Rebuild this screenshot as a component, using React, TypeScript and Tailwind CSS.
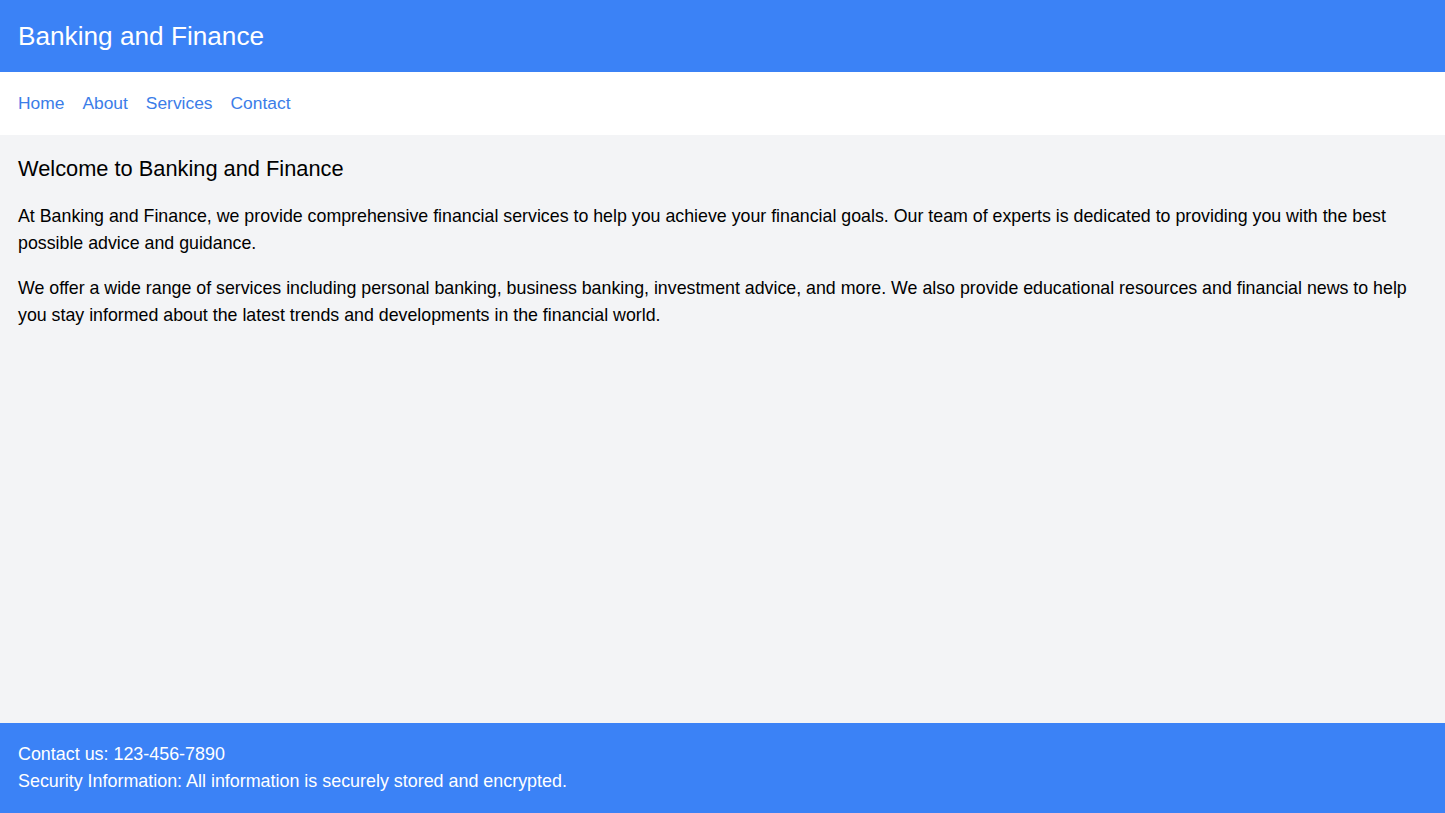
import React from "react";

export default function App() {
  return (
    <div className="min-h-screen flex flex-col bg-[#f3f4f6] text-black font-['Liberation_Sans',Arial,sans-serif]">
      <header className="bg-[#3b82f6] px-[18px] py-[18px]">
        <h1 className="text-[26.2px] leading-[36px] text-white">Banking and Finance</h1>
      </header>
      <nav className="bg-white px-[18px] py-[18px]">
        <ul className="flex gap-[18px] text-[17.4px] leading-[27px] text-[#3b7de8]">
          <li><a href="#">Home</a></li>
          <li><a href="#">About</a></li>
          <li><a href="#">Services</a></li>
          <li><a href="#">Contact</a></li>
        </ul>
      </nav>
      <main className="flex-1 p-[18px]">
        <h2 className="text-[21.8px] leading-[31.5px] mb-[18px]">Welcome to Banking and Finance</h2>
        <p className="text-[17.8px] leading-[27px] mb-[18px]">
          At Banking and Finance, we provide comprehensive financial services to help you achieve your financial goals. Our team of experts is dedicated to providing you with the best possible advice and guidance.
        </p>
        <p className="text-[17.8px] leading-[27px]">
          We offer a wide range of services including personal banking, business banking, investment advice, and more. We also provide educational resources and financial news to help you stay informed about the latest trends and developments in the financial world.
        </p>
      </main>
      <footer className="bg-[#3b82f6] p-[18px] text-white text-[17.9px] leading-[27px]">
        <p>Contact us: 123-456-7890</p>
        <p>Security Information: All information is securely stored and encrypted.</p>
      </footer>
    </div>
  );
}
